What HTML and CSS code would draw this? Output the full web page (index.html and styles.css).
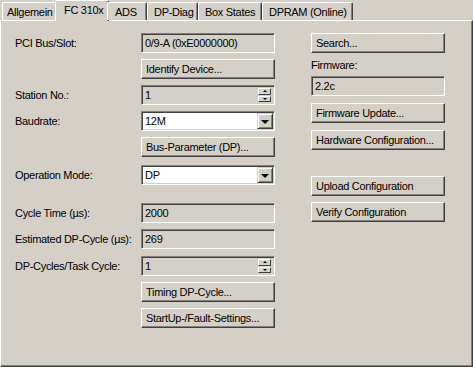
FILE: index.html
```html
<!DOCTYPE html>
<html lang="en">
<head>
    <meta charset="UTF-8">
    <title>FC 310x</title>
    <link rel="stylesheet" href="styles.css">
</head>
<body>
    <div class="tabs">
        <div class="tab tab-allgemein">Allgemein</div>
        <div class="tab tab-fc active">FC 310x</div>
        <div class="tab tab-ads">ADS</div>
        <div class="tab tab-diag">DP-Diag</div>
        <div class="tab tab-box">Box States</div>
        <div class="tab tab-dpram">DPRAM (Online)</div>
    </div>

    <div class="panel">
        <div class="left-col">
            <div class="row">
                <span class="label">PCI Bus/Slot:</span>
                <div class="field">0/9-A (0xE0000000)</div>
            </div>
            <div class="row">
                <span class="label"></span>
                <button class="btn">Identify Device...</button>
            </div>
            <div class="row">
                <span class="label">Station No.:</span>
                <div class="field">1
                    <div class="spin"><span class="spin-up"></span><span class="spin-down"></span></div>
                </div>
            </div>
            <div class="row">
                <span class="label">Baudrate:</span>
                <div class="field select">12M
                    <div class="drop"></div>
                </div>
            </div>
            <div class="row row-tall">
                <span class="label"></span>
                <button class="btn">Bus-Parameter (DP)...</button>
            </div>
            <div class="row row-gap-after">
                <span class="label">Operation Mode:</span>
                <div class="field select">DP
                    <div class="drop"></div>
                </div>
            </div>
            <div class="row">
                <span class="label">Cycle Time (&micro;s):</span>
                <div class="field">2000</div>
            </div>
            <div class="row row-tall">
                <span class="label">Estimated DP-Cycle (&micro;s):</span>
                <div class="field">269</div>
            </div>
            <div class="row">
                <span class="label">DP-Cycles/Task Cycle:</span>
                <div class="field">1
                    <div class="spin"><span class="spin-up"></span><span class="spin-down"></span></div>
                </div>
            </div>
            <div class="row">
                <span class="label"></span>
                <button class="btn">Timing DP-Cycle...</button>
            </div>
            <div class="row">
                <span class="label"></span>
                <button class="btn">StartUp-/Fault-Settings...</button>
            </div>
        </div>

        <div class="right-col">
            <button class="btn">Search...</button>
            <div class="side-label">Firmware:</div>
            <div class="field">2.2c</div>
            <button class="btn btn-fw">Firmware Update...</button>
            <button class="btn">Hardware Configuration...</button>
            <button class="btn btn-upload">Upload Configuration</button>
            <button class="btn">Verify Configuration</button>
        </div>
    </div>
</body>
</html>
```

FILE: styles.css
```css
body {
    margin: 0;
    width: 473px;
    height: 367px;
    overflow: hidden;
    background-color: #d4d0c8;
    font-family: "Liberation Sans", Arial, sans-serif;
    font-size: 11px;
    letter-spacing: -0.3px;
    color: #000000;
}

/* tab strip */
.tabs {
    display: flex;
    align-items: flex-end;
    height: 20px;
    padding-left: 2px;
    position: relative;
    z-index: 1;
}

.tab {
    box-sizing: border-box;
    height: 18px;
    padding: 2px 0 0 6px;
    line-height: 14px;
    border-left: 1px solid #ffffff;
    border-top: 1px solid #ffffff;
    border-right: 1px solid #404040;
    box-shadow: inset -1px 0 #808080;
    border-radius: 2px 2px 0 0;
    background-color: #d4d0c8;
    white-space: nowrap;
    overflow: hidden;
}

.tab-allgemein { width: 55px; padding-left: 4px; }
.tab-fc { width: 54px; }
.tab-ads { width: 40px; padding-left: 7px; }
.tab-diag { width: 51px; }
.tab-box { width: 64px; }
.tab-dpram { width: 91px; }

.tab.active {
    height: 21px;
    margin: 0 -2px -1px -2px;
    padding-top: 2px;
    padding-left: 8px;
}

/* panel */
.panel {
    box-sizing: border-box;
    width: 473px;
    height: 347px;
    border-top: 1px solid #ffffff;
    border-left: 1px solid #ffffff;
    border-right: 1px solid #404040;
    border-bottom: 1px solid #404040;
    box-shadow: inset -1px -1px #808080;
    padding: 12px 0 0 14px;
    display: flex;
}

.left-col {
    display: flex;
    flex-direction: column;
}

.row {
    display: flex;
    align-items: center;
    height: 20px;
    margin-bottom: 6px;
}

.row-tall {
    margin-bottom: 7px;
}

.row-gap-after {
    margin-top: 1px;
    margin-bottom: 18px;
}

.label {
    width: 126px;
}

/* sunken fields */
.field {
    box-sizing: border-box;
    width: 134px;
    height: 20px;
    padding: 0 2px 0 3px;
    line-height: 16px;
    border: 1px solid;
    border-color: #808080 #ffffff #ffffff #808080;
    box-shadow: inset 1px 1px #404040, inset -1px -1px #d4d0c8;
    display: flex;
    align-items: center;
    white-space: nowrap;
}

.field.select {
    background-color: #ffffff;
}

.spin {
    margin-left: auto;
    width: 13px;
    height: 14px;
    display: flex;
    flex-direction: column;
    gap: 1px;
    margin-right: 1px;
}

.spin span {
    flex: 1;
    box-sizing: border-box;
    border: 1px solid;
    border-color: #ffffff #404040 #404040 #ffffff;
    display: flex;
    align-items: center;
    justify-content: center;
}

.spin-up::after {
    content: "";
    border-left: 2px solid transparent;
    border-right: 2px solid transparent;
    border-bottom: 2px solid #000000;
}

.spin-down::after {
    content: "";
    border-left: 2px solid transparent;
    border-right: 2px solid transparent;
    border-top: 2px solid #000000;
}

.drop {
    margin-left: auto;
    margin-right: -1px;
    box-sizing: border-box;
    width: 16px;
    height: 16px;
    background-color: #d4d0c8;
    border: 1px solid;
    border-color: #d4d0c8 #404040 #404040 #d4d0c8;
    box-shadow: inset 1px 1px #ffffff, inset -1px -1px #808080;
    display: flex;
    align-items: center;
    justify-content: center;
}

.drop::after {
    content: "";
    border-left: 4px solid transparent;
    border-right: 4px solid transparent;
    border-top: 4px solid #000000;
    margin-top: 1px;
}

/* push buttons */
.btn {
    box-sizing: border-box;
    width: 134px;
    height: 20px;
    padding: 0 0 0 4px;
    margin: 0;
    text-align: left;
    font-family: inherit;
    font-size: 11px;
    letter-spacing: inherit;
    color: #000000;
    background-color: #d4d0c8;
    border: 1px solid;
    border-color: #ffffff #404040 #404040 #ffffff;
    box-shadow: inset -1px -1px #808080;
    white-space: nowrap;
}

/* right column */
.right-col {
    margin-left: 36px;
    display: flex;
    flex-direction: column;
    width: 134px;
}

.side-label {
    line-height: 14px;
    margin: 5px 0 4px;
}

.btn-fw {
    margin: 7px 0 7px;
}

.btn-upload {
    margin: 26px 0 6px;
}
```
